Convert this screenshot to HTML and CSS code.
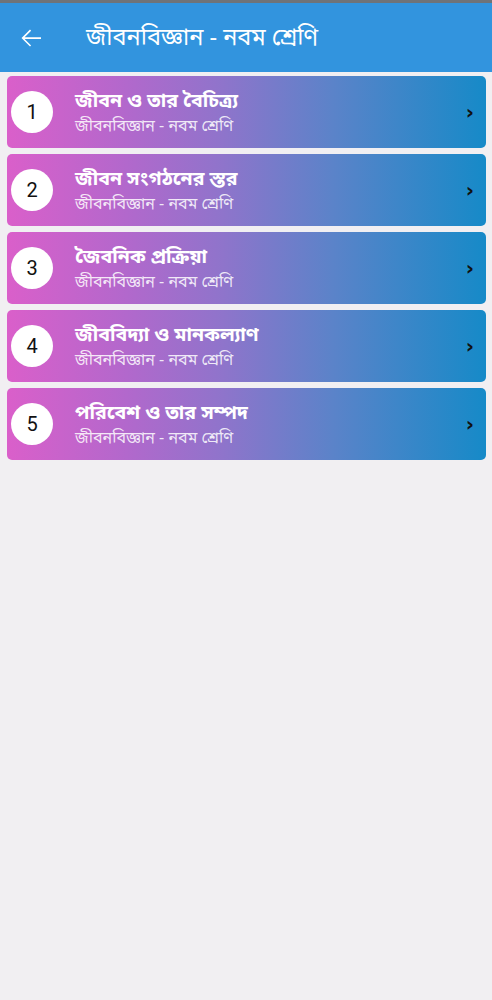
FILE: index.html
```html
<!DOCTYPE html>
<html lang="bn">
<head>
    <meta charset="UTF-8">
    <meta name="viewport" content="width=device-width, initial-scale=1.0">
    <title>জীবনবিজ্ঞান - নবম শ্রেণি</title>
    <link rel="stylesheet" href="styles.css">
</head>
<body>
    <div class="status-strip"></div>
    <header class="app-bar">
        <button class="btn-back" aria-label="Back">
            <svg width="30" height="30" viewBox="0 0 24 24">
                <path d="M20 11.3H6.9l5.2-5.2L11.2 5.2 4.4 12l6.8 6.8.9-.9-5.2-5.2H20v-1.4z" fill="#fff"/>
            </svg>
        </button>
        <h1 class="app-title">জীবনবিজ্ঞান - নবম শ্রেণি</h1>
    </header>

    <ul class="chapter-list">
        <li class="chapter-card">
            <span class="chapter-num">1</span>
            <div class="chapter-text">
                <span class="chapter-title">জীবন ও তার বৈচিত্র্য</span>
                <span class="chapter-sub">জীবনবিজ্ঞান - নবম শ্রেণি</span>
            </div>
            <span class="chevron">›</span>
        </li>
        <li class="chapter-card">
            <span class="chapter-num">2</span>
            <div class="chapter-text">
                <span class="chapter-title">জীবন সংগঠনের স্তর</span>
                <span class="chapter-sub">জীবনবিজ্ঞান - নবম শ্রেণি</span>
            </div>
            <span class="chevron">›</span>
        </li>
        <li class="chapter-card">
            <span class="chapter-num">3</span>
            <div class="chapter-text">
                <span class="chapter-title">জৈবনিক প্রক্রিয়া</span>
                <span class="chapter-sub">জীবনবিজ্ঞান - নবম শ্রেণি</span>
            </div>
            <span class="chevron">›</span>
        </li>
        <li class="chapter-card">
            <span class="chapter-num">4</span>
            <div class="chapter-text">
                <span class="chapter-title">জীববিদ্যা ও মানকল্যাণ</span>
                <span class="chapter-sub">জীবনবিজ্ঞান - নবম শ্রেণি</span>
            </div>
            <span class="chevron">›</span>
        </li>
        <li class="chapter-card">
            <span class="chapter-num">5</span>
            <div class="chapter-text">
                <span class="chapter-title">পরিবেশ ও তার সম্পদ</span>
                <span class="chapter-sub">জীবনবিজ্ঞান - নবম শ্রেণি</span>
            </div>
            <span class="chevron">›</span>
        </li>
    </ul>
</body>
</html>
```

FILE: styles.css
```css
/* Base */
body {
    margin: 0;
    padding: 0;
    background-color: #f1eff2;
    font-family: "Noto Sans Bengali", "Noto Sans", "Liberation Sans", sans-serif;
    min-height: 1000px;
}

.status-strip {
    height: 3px;
    background-color: #6f7378;
}

/* App bar */
.app-bar {
    height: 69px;
    background-color: #3294de;
    display: flex;
    align-items: center;
    padding-left: 16px;
}

.btn-back {
    background: none;
    border: none;
    padding: 0;
    width: 30px;
    height: 30px;
    display: flex;
}

.app-title {
    margin: 2px 0 0 40px;
    color: #fff;
    font-size: 23.5px;
    font-weight: normal;
}

/* Chapter list */
.chapter-list {
    list-style: none;
    margin: 0;
    padding: 4px 6px 0 7px;
    display: flex;
    flex-direction: column;
    gap: 6px;
}

.chapter-card {
    height: 72px;
    border-radius: 5px;
    background: linear-gradient(to right, #da5fca 0%, #b268cc 25%, #8f74cb 45%, #5b83c9 68%, #168ac8 100%);
    display: flex;
    align-items: center;
    padding: 0 12px 0 4px;
}

.chapter-num {
    width: 42px;
    height: 42px;
    border-radius: 50%;
    background-color: #fff;
    color: #111;
    font-family: "Roboto", "Liberation Sans", sans-serif;
    font-size: 20px;
    display: flex;
    justify-content: center;
    align-items: center;
    flex-shrink: 0;
}

.chapter-text {
    flex: 1;
    display: flex;
    flex-direction: column;
    margin-left: 22px;
    padding-top: 4px;
}

.chapter-title {
    color: #fff;
    font-size: 19.5px;
    line-height: 26px;
    font-weight: bold;
}

.chapter-sub {
    color: rgba(255, 255, 255, 0.85);
    font-size: 16px;
    line-height: 24px;
}

.chevron {
    color: #111;
    font-family: "DejaVu Sans", sans-serif;
    font-size: 20px;
    font-weight: bold;
}
```
